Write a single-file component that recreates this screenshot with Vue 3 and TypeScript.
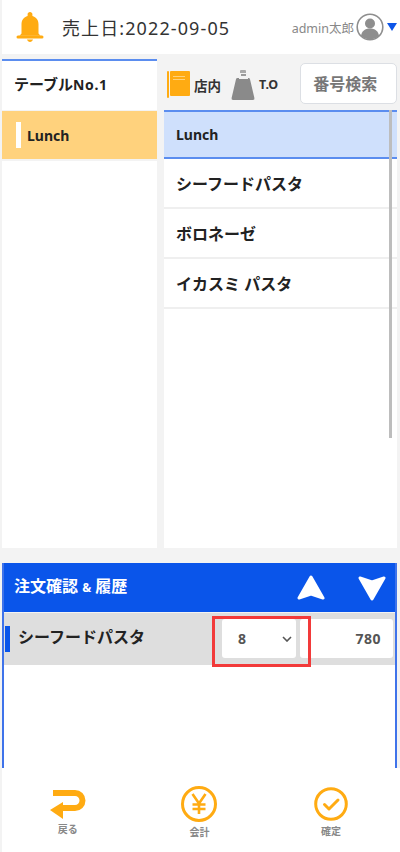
<script setup lang="ts">
const menus = ["シーフードパスタ", "ボロネーゼ", "イカスミ パスタ"]
</script>

<template>
  <div class="page">
    <header class="header">
      <svg class="bell" viewBox="0 0 28 30" width="28" height="30">
        <path d="M14 0c1.400 0 2.400 1 2.400 2.200v1.800c3.800 1 6.100 4.100 6.100 8.200v9.300l2 2.200H3.500l2-2.200v-9.300c0-4.100 2.300-7.200 6.100-8.200v-1.800c0-1.200 1-2.200 2.400-2.200z" fill="#ffab12" />
        <rect x="0.500" y="23.500" width="27" height="3" rx="1.500" fill="#ffab12" />
        <path d="M11 27.500h6c-.5 1.600-1.600 2.500-3 2.500s-2.500-.9-3-2.500z" fill="#ffab12" />
      </svg>
      <span class="sales-date">売上日:2022-09-05</span>
      <div class="user">
        <span class="user-name">admin太郎</span>
        <svg viewBox="0 0 28 28" width="28" height="28">
          <circle cx="14" cy="14" r="12.800" fill="#fff" stroke="#8e8e8e" stroke-width="1.600" />
          <circle cx="14" cy="10.500" r="5" fill="#8e8e8e" />
          <path d="M5 23c.6-5 4-7.500 9-7.500s8.400 2.500 9 7.500c-2.300 2-5.500 3.300-9 3.300s-6.700-1.300-9-3.300z" fill="#8e8e8e" />
        </svg>
        <span class="caret"></span>
      </div>
    </header>

    <div class="columns">
      <aside class="side">
        <div class="table-no">テーブル<small>No.1</small></div>
        <div class="category"><i></i>Lunch</div>
        <div class="side-rest"></div>
      </aside>
      <main class="content">
        <div class="tools">
          <svg class="note" viewBox="0 0 23 27" width="23" height="27">
            <rect x="3" y="0" width="20" height="25" rx="1" fill="#ffab12" />
            <rect x="0" y="0" width="2" height="27" rx="1" fill="#ffab12" />
            <rect x="6" y="5" width="12" height="1" fill="#ffd27a" />
            <rect x="6" y="8" width="12" height="1" fill="#ffd27a" />
          </svg>
          <span class="tool-label">店内</span>
          <svg class="bag" viewBox="0 0 24 30" width="24" height="30">
            <path d="M6.500 8h11a1.500 1.500 0 0 1 1.500 1.200l4.400 18.800a1.600 1.600 0 0 1-1.500 2H2.100a1.600 1.600 0 0 1-1.500-2L5 9.200A1.500 1.500 0 0 1 6.500 8z" fill="#8a8a8a" />
            <rect x="9" y="0" width="6" height="4" rx="1" fill="#a8a8a8" />
            <rect x="8" y="3" width="9" height="6" fill="#f2f2f2" />
            <rect x="10" y="4" width="5" height="2" fill="#9a9a9a" />
          </svg>
          <span class="tool-label to">T.O</span>
          <input class="search" type="text" placeholder="番号検索" />
        </div>
        <div class="list-head">Lunch</div>
        <ul class="menu-list">
          <li v-for="m in menus" :key="m">{{ m }}</li>
        </ul>
        <div class="scrollbar"></div>
      </main>
    </div>

    <section class="order">
      <div class="order-head">
        <span class="order-title">注文確認 <small>&amp;</small> 履歴</span>
        <svg viewBox="0 0 28 26" width="28" height="26" class="up">
          <path d="M14 2L26 23L14 19L2 23Z" fill="#fff" stroke="#fff" stroke-width="3" stroke-linejoin="round" />
        </svg>
        <svg viewBox="0 0 28 26" width="28" height="26" class="down">
          <path d="M14 24L26 3L14 7L2 3Z" fill="#fff" stroke="#fff" stroke-width="3" stroke-linejoin="round" />
        </svg>
      </div>
      <div class="order-row">
        <i class="mark"></i>
        <span class="order-name">シーフードパスタ</span>
        <div class="qty">
          <span>8</span>
          <svg viewBox="0 0 10 6" width="10" height="6"><path d="M1 1l4 4 4-4" fill="none" stroke="#555" stroke-width="1.600" /></svg>
        </div>
        <div class="price">780</div>
        <div class="highlight"></div>
      </div>
      <div class="order-body"></div>
    </section>

    <footer class="footer">
      <div class="foot-item back">
        <svg viewBox="0 0 36 30" width="36" height="30">
          <path d="M3 3h22a7.500 7.500 0 0 1 0 15H10" fill="none" stroke="#ffab12" stroke-width="6" />
          <path d="M0 20L13 12V29Z" fill="#ffab12" />
        </svg>
        <span>戻る</span>
      </div>
      <div class="foot-item">
        <svg viewBox="0 0 36 36" width="36" height="36">
          <circle cx="18" cy="18" r="16.500" fill="none" stroke="#ffab12" stroke-width="3" />
          <path d="M11.500 8L18 17.500L24.500 8M18 17.500V28M11.500 18.500H24.500M11.500 23H24.500" fill="none" stroke="#ffab12" stroke-width="2.600" />
        </svg>
        <span>会計</span>
      </div>
      <div class="foot-item check">
        <svg viewBox="0 0 34 34" width="34" height="34">
          <circle cx="17" cy="17" r="15.300" fill="none" stroke="#ffab12" stroke-width="3" />
          <path d="M10.500 17.500L15 22L24 13" fill="none" stroke="#ffab12" stroke-width="3" stroke-linecap="round" stroke-linejoin="round" />
        </svg>
        <span>確定</span>
      </div>
    </footer>
  </div>
</template>

<style>
body {
  margin: 0;
}
</style>

<style scoped>
.page {
  width: 400px;
  height: 852px;
  overflow: hidden;
  box-sizing: border-box;
  padding-left: 2px;
  background: #f3f3f3;
  font-family: "Noto Sans", "Noto Sans CJK JP", sans-serif;
  color: #222;
  display: flex;
  flex-direction: column;
}

.header {
  height: 54px;
  flex: none;
  background: #fff;
  display: flex;
  align-items: center;
  padding: 0 3px 0 14px;
}
.bell {
  margin-right: 18px;
}
.sales-date {
  font-size: 18px;
  letter-spacing: 1.100px;
  color: #333;
}
.user {
  margin-left: auto;
  display: flex;
  align-items: center;
  gap: 2px;
}
.user-name {
  font-size: 12.500px;
  color: #888;
}
.caret {
  width: 0;
  height: 0;
  border-left: 5.500px solid transparent;
  border-right: 5.500px solid transparent;
  border-top: 8px solid #0d55e8;
  margin-left: 1px;
}

.columns {
  height: 489px;
  flex: none;
  margin: 5px 3px 0 0;
  display: flex;
  gap: 7px;
}
.side {
  width: 155px;
  display: flex;
  flex-direction: column;
}
.table-no {
  height: 49px;
  flex: none;
  border-top: 2px solid #5b8def;
  background: #fff;
  padding-left: 12px;
  font-size: 15px;
  font-weight: 700;
  line-height: 47px;
}
.table-no small {
  font-size: 14px;
  letter-spacing: 0.600px;
}
.category {
  height: 48px;
  flex: none;
  margin-top: 1px;
  background: #ffd27d;
  display: flex;
  align-items: center;
  font-size: 14px;
  font-weight: 700;
}
.category i {
  width: 5px;
  height: 26px;
  background: #fff;
  margin: 0 6px 0 14px;
}
.side-rest {
  flex: 1;
  margin-top: 2px;
  background: #fff;
}

.content {
  flex: 1;
  min-width: 0;
  display: flex;
  flex-direction: column;
  position: relative;
}
.tools {
  height: 51px;
  flex: none;
  display: flex;
  align-items: center;
  padding-left: 3px;
}
.tool-label {
  font-size: 13.500px;
  font-weight: 700;
  margin-left: 4px;
  margin-right: 10px;
  color: #333;
}
.tool-label.to {
  font-size: 12.500px;
  margin-left: 4px;
  margin-right: 0;
}
.search {
  margin-left: 22px;
  flex: 1;
  min-width: 0;
  height: 41px;
  margin-bottom: 2px;
  box-sizing: border-box;
  border: 1px solid #dcdfe4;
  border-radius: 5px;
  background: #fff;
  padding: 0 12px;
  font: 700 16px "Noto Sans", "Noto Sans CJK JP", sans-serif;
}
.search::placeholder {
  color: #777;
}
.list-head {
  height: 49px;
  flex: none;
  box-sizing: border-box;
  background: #cfe0fc;
  border-top: 2px solid #5b8def;
  border-bottom: 2px solid #5b8def;
  padding-left: 12px;
  line-height: 46px;
  font-size: 14px;
  font-weight: 700;
}
.menu-list {
  flex: 1;
  margin: 0;
  padding: 0;
  list-style: none;
  background: #fff;
}
.menu-list li {
  height: 50px;
  box-sizing: border-box;
  border-bottom: 2px solid #efefef;
  padding-left: 12px;
  line-height: 50px;
  font-size: 16px;
  font-weight: 700;
}
.scrollbar {
  position: absolute;
  right: 5px;
  top: 51px;
  width: 3px;
  height: 328px;
  background: #bdbdbd;
}

.order {
  height: 205px;
  flex: none;
  margin: 15px 3px 0 0;
  display: flex;
  flex-direction: column;
  border: solid #3f73ea;
  border-width: 0 2px;
}
.order-head {
  height: 49px;
  flex: none;
  background: #0a55ea;
  display: flex;
  align-items: center;
  padding-left: 10px;
  color: #fff;
}
.order-title {
  font-size: 16px;
  font-weight: 700;
  margin-bottom: 5px;
}
.order-title small {
  font-size: 12px;
}
.up {
  margin-left: auto;
}
.down {
  margin-left: 33px;
  margin-right: 9px;
}
.order-row {
  height: 52px;
  flex: none;
  margin-top: 1px;
  background: #dedede;
  display: flex;
  align-items: flex-start;
  position: relative;
}
.mark {
  width: 5px;
  height: 26px;
  background: #0a55ea;
  margin: 13px 8px 0 1px;
}
.order-name {
  flex: 1;
  font-size: 16px;
  font-weight: 700;
  line-height: 24px;
  margin-top: 12px;
}
.qty,
.price {
  height: 39px;
  margin-top: 6px;
  background: #fff;
  border-radius: 3px;
  font-size: 14px;
  font-weight: 700;
  color: #555;
  display: flex;
  align-items: center;
  box-sizing: border-box;
}
.qty {
  width: 74px;
  padding: 0 4px 0 16px;
  justify-content: space-between;
  margin-right: 4px;
}
.price {
  width: 93px;
  justify-content: flex-end;
  padding-right: 12px;
  letter-spacing: 0.500px;
  margin-right: 2px;
}
.highlight {
  position: absolute;
  left: 208px;
  top: 3px;
  width: 99px;
  height: 51px;
  box-sizing: border-box;
  border: 3px solid #f23a3a;
}
.order-body {
  flex: 1;
  background: #fff;
}

.footer {
  flex: 1;
  background: #fff;
  display: flex;
  padding: 18px 3px 0 0;
  box-sizing: border-box;
}
.foot-item {
  display: flex;
  flex-direction: column;
  align-items: center;
  width: 33.33%;
  font-size: 10px;
  font-weight: 700;
  color: #888;
}
.foot-item span {
  margin-top: 2px;
}
.foot-item.back svg {
  margin-top: 4px;
}
.foot-item.back span {
  margin-top: 1px;
}
.foot-item.check svg {
  margin-top: 1px;
}
</style>
